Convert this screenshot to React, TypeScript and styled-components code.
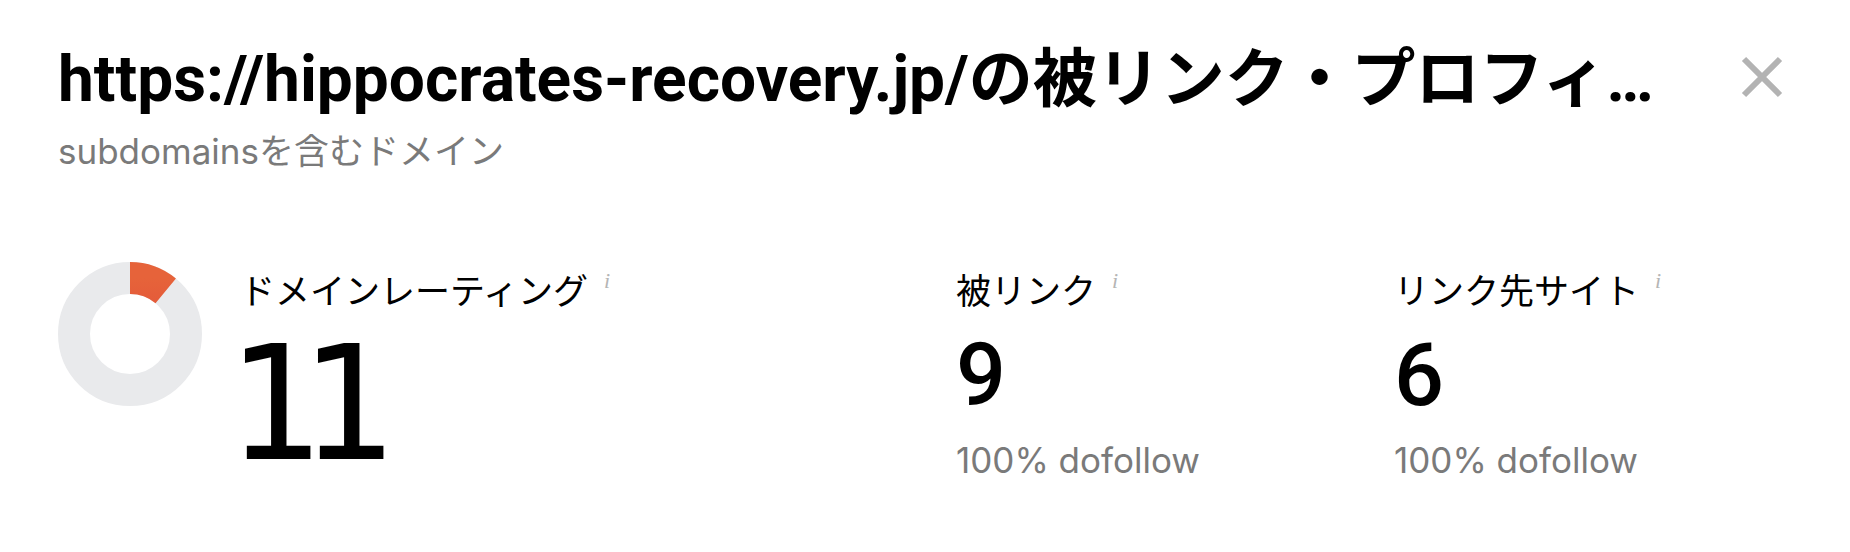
import styled, { createGlobalStyle } from "styled-components"

const GlobalStyle = createGlobalStyle`
  html, body {
    margin: 0;
    padding: 0;
    background: #fff;
  }
  body {
    font-family: Inter, "Noto Sans CJK JP", sans-serif;
    color: #000;
  }
`

const stats = [
  { label: "被リンク", value: "9", note: "100% dofollow" },
  { label: "リンク先サイト", value: "6", note: "100% dofollow" },
]

const Donut: React.FC<{ value: number }> = ({ value }) => {
  const r = 56
  const c = 2 * Math.PI * r
  return (
    <svg width="144" height="144" viewBox="0 0 144 144">
      <defs>
        <linearGradient id="dr" x1="0" y1="0" x2="1" y2="0">
          <stop offset="0%" stopColor="#df4139" />
          <stop offset="100%" stopColor="#e6633a" />
        </linearGradient>
      </defs>
      <circle cx="72" cy="72" r={r} fill="none" stroke="#e9eaec" strokeWidth="32" />
      <circle
        cx="72"
        cy="72"
        r={r}
        fill="none"
        stroke="url(#dr)"
        strokeWidth="32"
        strokeDasharray={`${(value / 100) * c} ${c}`}
        transform="rotate(-90 72 72)"
      />
    </svg>
  )
}

const Label: React.FC<{ text: string }> = ({ text }) => (
  <LabelRow>
    {text}
    <Info>i</Info>
  </LabelRow>
)

const App: React.FC = () => {
  return (
    <Page>
      <GlobalStyle />
      <Header>
        <TitleBlock>
          <Title>https://hippocrates-recovery.jp/の被リンク・プロフィール</Title>
          <Subtitle>subdomainsを含むドメイン</Subtitle>
        </TitleBlock>
        <CloseButton aria-label="close">
          <svg width="42" height="42" viewBox="0 0 42 42">
            <path d="M3 3 L39 39 M39 3 L3 39" stroke="#b3b3b3" strokeWidth="6" />
          </svg>
        </CloseButton>
      </Header>
      <Stats>
        <RatingCard>
          <Donut value={11} />
          <Metric>
            <Label text="ドメインレーティング" />
            <BigValue>11</BigValue>
          </Metric>
        </RatingCard>
        {stats.map((s) => (
          <Metric key={s.label}>
            <Label text={s.label} />
            <Value>{s.value}</Value>
            <Note>{s.note}</Note>
          </Metric>
        ))}
      </Stats>
    </Page>
  )
}

export default App

const Page = styled.div`
  width: 1850px;
  height: 552px;
  box-sizing: border-box;
  padding: 44px 67px 0 58px;
  overflow: hidden;
`
const Header = styled.div`
  display: flex;
  align-items: flex-start;
  gap: 62px;
`
const TitleBlock = styled.div`
  flex: 1;
  min-width: 0;
`
const Title = styled.h1`
  margin: 0;
  font-family: Roboto, "Noto Sans CJK JP", sans-serif;
  font-weight: 700;
  font-size: 64px;
  line-height: 72px;
  white-space: nowrap;
  overflow: hidden;
  text-overflow: ellipsis;
`
const Subtitle = styled.div`
  margin-top: 14px;
  font-size: 35px;
  line-height: 42px;
  color: #7a7a7a;
`
const CloseButton = styled.button`
  margin-top: 12px;
  padding: 0;
  border: none;
  background: none;
  width: 42px;
  height: 42px;
  cursor: pointer;
`
const Stats = styled.div`
  display: grid;
  grid-template-columns: 898px 438px 1fr;
  margin-top: 90px;
`
const RatingCard = styled.div`
  display: flex;
  align-items: flex-start;
  gap: 38px;
`
const Metric = styled.div`
  display: flex;
  flex-direction: column;
  align-items: flex-start;
  padding-top: 8px;
`
const LabelRow = styled.div`
  display: flex;
  align-items: flex-start;
  font-size: 35px;
  line-height: 42px;
`
const Info = styled.span`
  margin-left: 16px;
  font-family: "Liberation Serif", serif;
  font-style: italic;
  font-size: 22px;
  line-height: 22px;
  color: #b5b5b5;
`
const Value = styled.div`
  margin-top: 19px;
  font-family: Roboto, sans-serif;
  font-weight: 500;
  font-size: 88px;
  line-height: 88px;
`
const BigValue = styled.div`
  margin-top: 32px;
  margin-left: -14px;
  font-family: "DejaVu Sans Mono", monospace;
  font-weight: 400;
  font-size: 158px;
  line-height: 120px;
  letter-spacing: -22px;
`
const Note = styled.div`
  margin-top: 20px;
  font-size: 35px;
  line-height: 42px;
  color: #7a7a7a;
`
